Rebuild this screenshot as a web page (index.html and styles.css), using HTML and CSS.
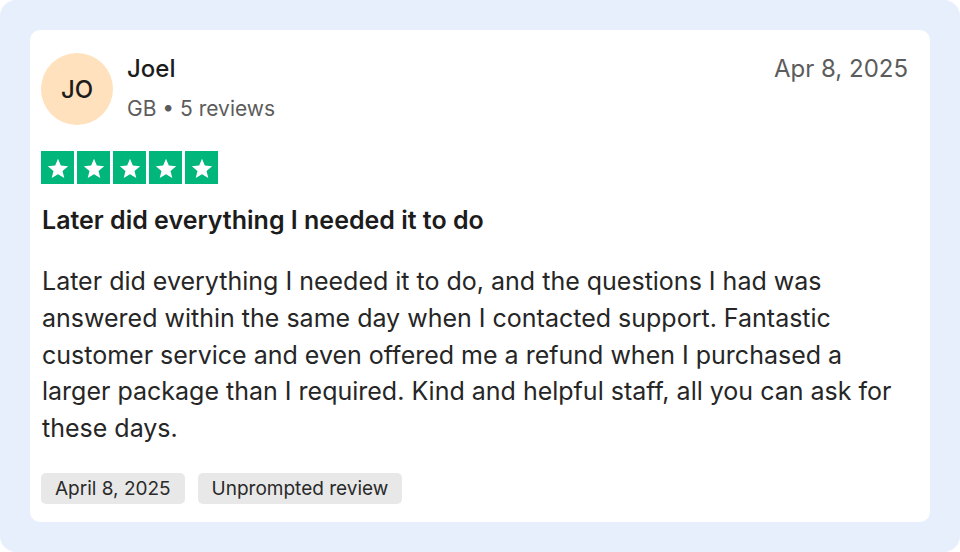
FILE: index.html
```html
<!DOCTYPE html>
<html>
<head>
<meta charset="utf-8">
<link rel="stylesheet" href="styles.css">
</head>
<body>
<div class="frame">
  <div class="card">
    <div class="header">
      <div class="avatar">JO</div>
      <div class="who">
        <div class="name">Joel</div>
        <div class="meta">GB • 5 reviews</div>
      </div>
      <div class="date">Apr 8, 2025</div>
    </div>
    <div class="stars">
      <span class="star"><svg viewBox="0 0 24 24"><path d="M12 3.5l2.6 6.3 6.8.5-5.2 4.4 1.6 6.6L12 17.7l-5.8 3.6 1.6-6.6-5.2-4.4 6.8-.5z" fill="#fff"/></svg></span>
      <span class="star"><svg viewBox="0 0 24 24"><path d="M12 3.5l2.6 6.3 6.8.5-5.2 4.4 1.6 6.6L12 17.7l-5.8 3.6 1.6-6.6-5.2-4.4 6.8-.5z" fill="#fff"/></svg></span>
      <span class="star"><svg viewBox="0 0 24 24"><path d="M12 3.5l2.6 6.3 6.8.5-5.2 4.4 1.6 6.6L12 17.7l-5.8 3.6 1.6-6.6-5.2-4.4 6.8-.5z" fill="#fff"/></svg></span>
      <span class="star"><svg viewBox="0 0 24 24"><path d="M12 3.5l2.6 6.3 6.8.5-5.2 4.4 1.6 6.6L12 17.7l-5.8 3.6 1.6-6.6-5.2-4.4 6.8-.5z" fill="#fff"/></svg></span>
      <span class="star"><svg viewBox="0 0 24 24"><path d="M12 3.5l2.6 6.3 6.8.5-5.2 4.4 1.6 6.6L12 17.7l-5.8 3.6 1.6-6.6-5.2-4.4 6.8-.5z" fill="#fff"/></svg></span>
    </div>
    <h2 class="title">Later did everything I needed it to do</h2>
    <p class="body">Later did everything I needed it to do, and the questions I had was answered within the same day when I contacted support. Fantastic customer service and even offered me a refund when I purchased a larger package than I required. Kind and helpful staff, all you can ask for these days.</p>
    <div class="tags">
      <span class="tag">April 8, 2025</span>
      <span class="tag">Unprompted review</span>
    </div>
  </div>
</div>
</body>
</html>
```
FILE: styles.css
```css
html, body {
  margin: 0;
  padding: 0;
  background: #ffffff;
}
body {
  font-family: Inter, "Liberation Sans", sans-serif;
  color: #262626;
}
.frame {
  width: 960px;
  height: 552px;
  box-sizing: border-box;
  background: #e8effc;
  border-radius: 16px;
  padding: 30px;
}
.card {
  background: #ffffff;
  border-radius: 10px;
  height: 492px;
  box-sizing: border-box;
  padding: 23px 22px 18px 11px;
  display: flex;
  flex-direction: column;
}
.header {
  display: flex;
  align-items: flex-start;
}
.avatar {
  width: 72px;
  height: 72px;
  border-radius: 50%;
  background: #ffe1bd;
  display: flex;
  align-items: center;
  justify-content: center;
  font-size: 24px;
  font-weight: 500;
  color: #1c1c1c;
  flex: none;
}
.who {
  margin-left: 14px;
  flex: 1;
}
.name {
  font-size: 24px;
  font-weight: 500;
  line-height: 32px;
  color: #1c1c1c;
}
.meta {
  font-size: 21px;
  color: #5c5c5c;
  line-height: 30px;
  margin-top: 9px;
}
.date {
  font-size: 24px;
  color: #5c5c5c;
  line-height: 32px;
}
.stars {
  display: flex;
  gap: 3px;
  margin-top: 26px;
}
.star {
  width: 33px;
  height: 33px;
  background: #00b67a;
  display: flex;
  align-items: center;
  justify-content: center;
}
.star svg {
  width: 26px;
  height: 26px;
}
.title {
  font-size: 25px;
  font-weight: 600;
  margin: 20px 0 0 1px;
  line-height: 32px;
  color: #1c1c1c;
}
.body {
  font-size: 25px;
  line-height: 36.8px;
  margin: 27px 0 0 1px;
  max-width: 866px;
}
.tags {
  margin-top: auto;
  display: flex;
  gap: 13px;
}
.tag {
  background: #e8e8e8;
  border-radius: 5px;
  font-size: 19px;
  line-height: 31px;
  padding: 0 14px;
  color: #2a2a2a;
}
```
